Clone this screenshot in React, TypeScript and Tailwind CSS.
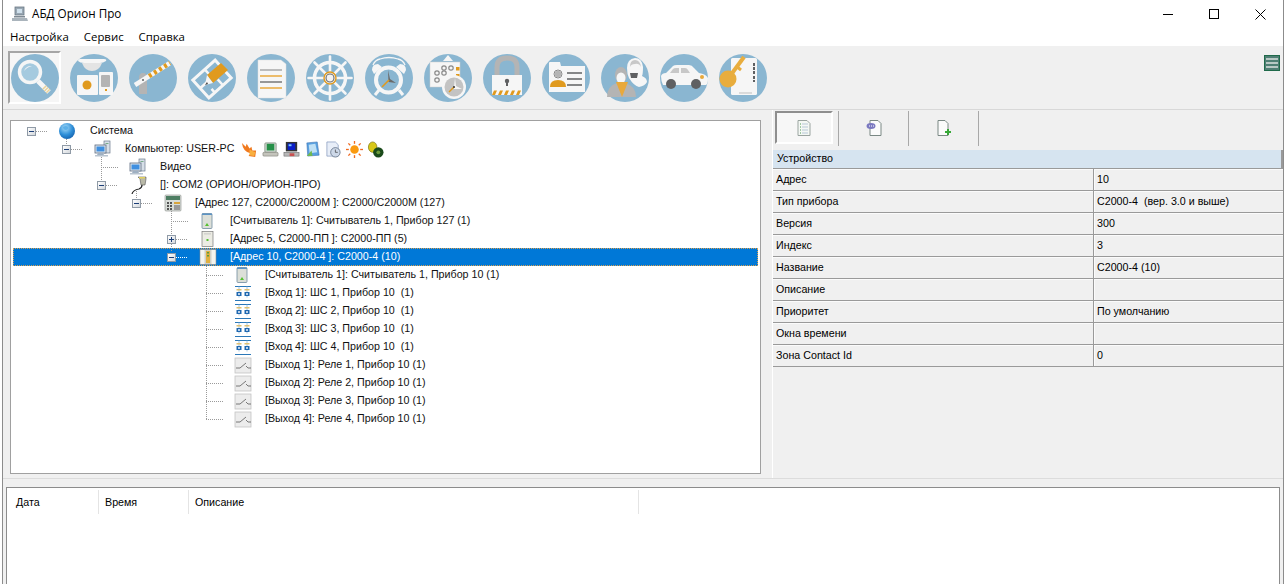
import type { ReactNode } from "react";

const BLUE = "#8ab6d1";
const ORANGE = "#e09a1e";
const WHITE = "#f6f6f6";
const GRAY = "#b4b4b4";
const DARK = "#5f6062";

function Disc({ children }: { children: ReactNode }) {
  return (
    <svg width="48" height="48" viewBox="0 0 48 48" className="block">
      <circle cx="24" cy="24" r="24" fill={BLUE} />
      {children}
    </svg>
  );
}

const toolIcons: ReactNode[] = [
  // search
  <Disc key="search">
    <line x1="27" y1="27" x2="38" y2="38" stroke={WHITE} strokeWidth="5" />
    <line x1="33" y1="33" x2="38" y2="38" stroke="#e8d29a" strokeWidth="5" strokeDasharray="1.5 1" />
    <circle cx="19" cy="18" r="10.5" fill="#a5cadf" stroke={WHITE} strokeWidth="3.5" />
    <path d="M13 17 a7 7 0 0 1 8 -5 q-5 1 -8 5z" fill={WHITE} />
  </Disc>,
  // devices
  <Disc key="devices">
    <path d="M8 7 q0 -2 2 -2 h24 q3 0 2 2 q-3 2 -6 2 q-2 7 -8 7 q-6 0 -8 -7 q-4 0 -6 -2z" fill={WHITE} />
    <path d="M12 9 h20 q-3 8 -10 8 q-7 0 -10 -8z" fill="#e4e4e4" />
    <rect x="7" y="21" width="21" height="20" rx="1" fill={WHITE} />
    <circle cx="17" cy="31" r="4.5" fill={ORANGE} />
    <rect x="29" y="18" width="14" height="23" rx="1" fill={WHITE} />
    <rect x="31" y="21" width="9" height="12" rx="1" fill={GRAY} />
    <rect x="35" y="35" width="2" height="2" fill={ORANGE} />
  </Disc>,
  // barrier
  <Disc key="barrier">
    <rect x="10" y="24" width="8" height="16" fill={GRAY} />
    <path d="M10 24 q0 -5 4 -5 q4 0 4 5z" fill={GRAY} />
    <line x1="6" y1="31" x2="41" y2="9" stroke={WHITE} strokeWidth="4.5" />
    <line x1="20" y1="22.2" x2="41" y2="9" stroke={ORANGE} strokeWidth="4.5" strokeDasharray="3 3" />
    <circle cx="14" cy="26" r="1" fill={DARK} />
  </Disc>,
  // floor plan
  <Disc key="plan">
    <g transform="rotate(-42 24 25)">
      <rect x="9" y="13" width="30" height="24" fill="none" stroke={WHITE} strokeWidth="3" />
      <path d="M9 24 h9 M25 13 v10 h14 M28 37 v-8 M17 37 v-5" stroke={WHITE} strokeWidth="2.5" fill="none" />
    </g>
    <path d="M19 21 L33 9 L40 16 L25 29z" fill={ORANGE} />
    <path d="M19 21 L25 29 L17 31z" fill={WHITE} />
    <path d="M19 28 L20 30 L17 31z" fill="#444" />
  </Disc>,
  // document
  <Disc key="doc">
    <path d="M11 6 h23 l5 4 v34 h-28z" fill={WHITE} stroke="#dcdcdc" strokeWidth="0.5" />
    <line x1="13" y1="16" x2="35" y2="16" stroke="#a8a8a8" strokeWidth="1.5" />
    <line x1="13" y1="22" x2="35" y2="22" stroke="#e8a93c" strokeWidth="1.5" />
    <line x1="13" y1="28" x2="35" y2="28" stroke="#777" strokeWidth="1.5" />
    <line x1="13" y1="34" x2="35" y2="34" stroke="#e8a93c" strokeWidth="1.5" />
  </Disc>,
  // helm
  <Disc key="helm">
    <circle cx="24" cy="24" r="15.5" fill="none" stroke={WHITE} strokeWidth="3.5" />
    <g stroke={WHITE} strokeWidth="2.6" strokeLinecap="round">
      <line x1="24" y1="2.5" x2="24" y2="45.5" />
      <line x1="2.5" y1="24" x2="45.5" y2="24" />
      <line x1="8.5" y1="8.5" x2="39.5" y2="39.5" />
      <line x1="39.5" y1="8.5" x2="8.5" y2="39.5" />
    </g>
    <circle cx="24" cy="24" r="6" fill={WHITE} stroke={ORANGE} strokeWidth="1.4" />
    <circle cx="24" cy="24" r="4" fill="#f2f2f2" stroke="#6a6a6a" strokeWidth="1.1" />
  </Disc>,
  // alarm clock
  <Disc key="alarm">
    <path d="M8 11 q2 -5 7 -6 q9 -3 18 0 q5 1 7 6" fill="none" stroke={WHITE} strokeWidth="1.3" />
    <path d="M7 16 q0 -6 6 -6 l4 3 l-8 7z M41 16 q0 -6 -6 -6 l-4 3 l8 7z" fill={WHITE} />
    <circle cx="23.5" cy="26" r="12.5" fill={BLUE} stroke={WHITE} strokeWidth="4" />
    <line x1="10" y1="41" x2="14" y2="36" stroke={WHITE} strokeWidth="3" />
    <line x1="38" y1="41" x2="34" y2="36" stroke={WHITE} strokeWidth="3" />
    <path d="M23 16 L25 25 L31 29 L23.5 28z" fill="#6a6a6a" />
    <line x1="24" y1="26" x2="17" y2="33" stroke={ORANGE} strokeWidth="1.6" />
  </Disc>,
  // schedule
  <Disc key="schedule">
    <path d="M19 7 L24 1 L29 7z" fill={WHITE} />
    <rect x="6" y="8" width="30" height="25" fill={WHITE} stroke="#cfcfcf" strokeWidth="0.5" />
    <g fill="none" stroke="#8a8a8a" strokeWidth="1.2">
      <circle cx="20" cy="14" r="2.2" />
      <circle cx="27" cy="14" r="2.2" />
      <circle cx="13" cy="19" r="2.2" />
      <circle cx="20" cy="19" r="2.2" />
      <circle cx="13" cy="26" r="2.2" />
    </g>
    <rect x="32" y="13" width="3.5" height="3.5" fill={ORANGE} />
    <rect x="32" y="20" width="3.5" height="3.5" fill={ORANGE} />
    <circle cx="30" cy="33" r="12" fill={WHITE} />
    <circle cx="30" cy="33" r="9.5" fill="#c3c3c3" />
    <path d="M30 33 L31 24 L32 32 L38 35 L30 35z" fill={WHITE} />
    <line x1="30" y1="33" x2="25" y2="38" stroke={ORANGE} strokeWidth="1.5" />
    <circle cx="30" cy="33" r="1" fill="#333" />
  </Disc>,
  // lock
  <Disc key="lock">
    <path d="M14 22 v-9 q0 -9 10 -9 q10 0 10 9 v9" fill="none" stroke={GRAY} strokeWidth="5" />
    <rect x="9" y="21" width="30" height="20" fill={WHITE} />
    <circle cx="24" cy="27" r="2.2" fill={DARK} />
    <rect x="23" y="27" width="2" height="5" fill={DARK} />
    <path d="M9 41 l2 -4.5 h3 l-2 4.5z M15 41 l2 -4.5 h3 l-2 4.5z M21 41 l2 -4.5 h3 l-2 4.5z M27 41 l2 -4.5 h3 l-2 4.5z M33 41 l2 -4.5 h3 l-2 4.5z" fill={ORANGE} />
  </Disc>,
  // id card
  <Disc key="card">
    <path d="M7 9 q0 -1 1 -1 h10 l1 4 h24 v26 h-36z" fill={WHITE} />
    <circle cx="16" cy="20" r="4" fill={WHITE} stroke="#8a8a8a" strokeWidth="1" />
    <circle cx="16" cy="20" r="3.2" fill={GRAY} />
    <path d="M8 33 q0 -7 8 -7 q8 0 8 7z" fill={ORANGE} />
    <g stroke={DARK} strokeWidth="1.5">
      <line x1="25" y1="19" x2="40" y2="19" />
      <line x1="25" y1="25" x2="40" y2="25" />
      <line x1="25" y1="31" x2="40" y2="31" />
    </g>
  </Disc>,
  // people
  <Disc key="people">
    <path d="M28 24 q-2 -4 -2 -10 q0 -9 8 -10 q7 0 8 9 q0 7 -1 9 q5 2 5 6 q-2 4 -8 5 q-5 -1 -10 -9z" fill={WHITE} />
    <path d="M29 13 q0 -7 5 -7 q5 0 6 7 q-2 -4 -6 -3 q-4 0 -5 3z" fill="#c8c8c8" />
    <path d="M29 19 h8 l-1 5 h-6z" fill={DARK} />
    <ellipse cx="20" cy="21" rx="6" ry="8" fill={GRAY} />
    <ellipse cx="20" cy="24" rx="4.5" ry="5.5" fill={WHITE} />
    <path d="M6 43 q0 -11 10 -14 h8 q11 3 11 14 h-29z" fill={GRAY} />
    <path d="M15 28 h12 l-6 15z" fill="#e8a93c" />
  </Disc>,
  // car
  <Disc key="car">
    <path d="M1 22 q1 -3 5 -3 l7 -7 q1 -1 4 -1 h12 q3 0 5 3 l5 5 q7 1 9 5 q0 6 -2 7 h-43 q-2 -4 -2 -9z" fill={WHITE} />
    <path d="M10 19 l3 -4 q1 -1 3 -1 h3 v5z M21 14 h4 q2 0 3 2 l2 3 h-9z" fill="#c8c8c8" />
    <circle cx="11" cy="30" r="5" fill={DARK} />
    <circle cx="36" cy="30" r="5" fill={DARK} />
    <circle cx="42" cy="23" r="2" fill="#e8a93c" />
  </Disc>,
  // key card
  <Disc key="key">
    <rect x="12" y="4" width="26" height="37" rx="1.5" fill={WHITE} />
    <g fill={DARK}>
      <rect x="34" y="9" width="2" height="3" />
      <rect x="34" y="13" width="2" height="3" />
      <rect x="34" y="17" width="2" height="3" />
      <rect x="34" y="22" width="2" height="3" />
      <rect x="34" y="26" width="2" height="2" />
    </g>
    <line x1="20" y1="39" x2="33" y2="39" stroke="#bfbfbf" strokeWidth="1" />
    <circle cx="9" cy="25" r="8.5" fill="#e8ad3e" />
    <line x1="11" y1="22" x2="25" y2="3" stroke="#e8ad3e" strokeWidth="4" />
    <line x1="17" y1="12" x2="22" y2="16" stroke="#e8ad3e" strokeWidth="3" />
  </Disc>,
];

function Small({ children, size = 18 }: { children: ReactNode; size?: number }) {
  return (
    <svg width={size} height={size} viewBox="0 0 18 18" className="block shrink-0">
      {children}
    </svg>
  );
}

const icons: Record<string, ReactNode> = {
  globe: (
    <Small>
      <defs>
        <radialGradient id="g1" cx="0.4" cy="0.3" r="0.8">
          <stop offset="0" stopColor="#a8dcf8" />
          <stop offset="0.55" stopColor="#2f8fd8" />
          <stop offset="1" stopColor="#0f5aa8" />
        </radialGradient>
      </defs>
      <circle cx="8" cy="9" r="8" fill="url(#g1)" />
      <path d="M4 5 q3 -2 5 0 q1 2 -2 3 q-3 0 -3 -3z" fill="#5cb0e8" />
    </Small>
  ),
  pc: (
    <Small>
      <rect x="10" y="1" width="6" height="12" fill="#d7dfe8" stroke="#6c7a8c" strokeWidth="0.7" />
      <rect x="11.5" y="3" width="3" height="1" fill="#7a8" />
      <rect x="1" y="5" width="11" height="8" fill="#dfe6ee" stroke="#5c6c80" strokeWidth="0.8" />
      <rect x="2.5" y="6.5" width="8" height="5" fill="#3f8fe0" />
      <path d="M4 13 h5 l1 2 h-7z" fill="#9fb0c2" />
      <rect x="1" y="15" width="13" height="1.5" fill="#b8c4d0" />
    </Small>
  ),
  com: (
    <Small>
      <path d="M9 1 h8 v2 l-1 6 h-2 l-2 -0 l-1 -6z" fill="#b9b9a8" stroke="#555" strokeWidth="0.6" />
      <rect x="10" y="1" width="6" height="1.5" fill="#e2d060" />
      <path d="M13 9 q0 3 -3 4 q-6 1 -7 5" fill="none" stroke="#222" strokeWidth="1.2" />
    </Small>
  ),
  panel: (
    <Small>
      <rect x="1" y="1" width="16" height="16" rx="1" fill="#d8dcd8" stroke="#8a8e8a" strokeWidth="0.6" />
      <rect x="2" y="2" width="14" height="4" fill="#4d7d62" />
      <g fill="#555">
        <rect x="3" y="8" width="2" height="2" />
        <rect x="6" y="8" width="2" height="2" />
        <rect x="3" y="11" width="2" height="2" />
        <rect x="6" y="11" width="2" height="2" />
        <rect x="3" y="14" width="2" height="2" />
        <rect x="6" y="14" width="2" height="2" />
      </g>
      <rect x="10" y="8" width="6" height="2" fill="#d9a43c" />
      <rect x="10" y="11" width="6" height="5" fill="#999" />
    </Small>
  ),
  reader: (
    <Small>
      <rect x="3" y="1.5" width="10" height="15" rx="1" fill="#dcdfd8" stroke="#6f8aa0" strokeWidth="0.8" />
      <rect x="3" y="1.5" width="10" height="1.5" fill="#5c93c4" />
      <path d="M8 11 l2 3 h-4z" fill="#55c030" />
    </Small>
  ),
  pp: (
    <Small>
      <rect x="3" y="1.5" width="11" height="15" fill="#ecece4" stroke="#7a7a7a" strokeWidth="0.7" />
      <rect x="5" y="3.5" width="7" height="0.8" fill="#bbb" />
      <rect x="7.5" y="9" width="2" height="2" fill="#55c030" />
    </Small>
  ),
  c4: (
    <Small>
      <rect x="1" y="1.5" width="16" height="15" fill="#d0d0c8" stroke="#8a8a8a" strokeWidth="0.6" />
      <rect x="1.5" y="2" width="4" height="14" fill="#f4f4ee" />
      <rect x="12.5" y="2" width="4" height="14" fill="#f4f4ee" />
      <rect x="7" y="3" width="4" height="12" fill="#e0b040" />
      <rect x="8" y="4" width="2" height="1.5" fill="#5a9a40" />
      <rect x="8" y="7" width="2" height="1.5" fill="#5a9a40" />
    </Small>
  ),
  input: (
    <Small>
      <path d="M1 2.5 h16 M1 16.5 h16" stroke="#2b78b8" strokeWidth="1" />
      <path d="M5 2.5 v11 M13 2.5 v11" stroke="#8ab8dc" strokeWidth="0.8" />
      <rect x="2.5" y="8" width="5" height="4" fill="#1f68b0" />
      <rect x="10.5" y="8" width="5" height="4" fill="#1f68b0" />
      <rect x="4" y="9.2" width="2" height="1.6" fill="#dfeaf5" />
      <rect x="12" y="9.2" width="2" height="1.6" fill="#dfeaf5" />
      <rect x="2.5" y="5" width="5" height="1.5" fill="#e0c070" />
      <rect x="10.5" y="5" width="5" height="1.5" fill="#e0c070" />
    </Small>
  ),
  relay: (
    <Small>
      <rect x="1" y="2" width="16" height="15" fill="#ececec" stroke="#c4c4c4" strokeWidth="0.8" />
      <path d="M2 12 h4 l6 -5 M12 10 l2 2 h3" fill="none" stroke="#6a6a6a" strokeWidth="0.9" />
    </Small>
  ),
};

const sysIcons: ReactNode[] = [
  <Small key="fire" size={17}>
    <path d="M1 2 l4 4 l1 -3 l3 5 l2 -2 l1 4 l4 0 l-1 7 l-7 -1 l2 -3 q-8 -2 -9 -11z" fill="#f07a20" />
    <path d="M9 9 l6 3 l-1 4 l-5 -1z" fill="#f8b040" />
  </Small>,
  <Small key="scan" size={17}>
    <rect x="3" y="2" width="12" height="10" rx="1" fill="#cfd8cf" stroke="#6a7a6a" strokeWidth="0.7" />
    <rect x="5" y="3" width="8" height="7" fill="#259048" />
    <rect x="1" y="12" width="16" height="4" rx="1" fill="#c4c4bc" stroke="#7a7a72" strokeWidth="0.6" />
  </Small>,
  <Small key="mon" size={17}>
    <rect x="3" y="1" width="12" height="10" fill="#333" />
    <rect x="5" y="2.5" width="8" height="7" fill="#0a1ec8" />
    <rect x="6" y="3.5" width="3" height="2" fill="#7ac8f8" />
    <rect x="1" y="12" width="16" height="4" fill="#b8b8b8" stroke="#555" strokeWidth="0.5" />
    <rect x="7" y="13" width="5" height="3" fill="#c85050" />
  </Small>,
  <Small key="note" size={17}>
    <path d="M3 2 l11 -1 l2 14 l-12 1z" fill="#58a0e0" stroke="#3a70b0" strokeWidth="0.6" />
    <path d="M5 4 l7 -1 l2 9 l-8 1z" fill="#bfe0f5" />
    <path d="M3 16 l5 -6 l1 6z" fill="#70b850" />
  </Small>,
  <Small key="clockdoc" size={17}>
    <path d="M2 1 h9 l3 3 v12 h-12z" fill="#e8eef8" stroke="#7a90b8" strokeWidth="0.7" />
    <circle cx="11" cy="12" r="5" fill="#cdd8e8" stroke="#5a6a80" strokeWidth="0.8" />
    <path d="M11 9 v3 h2.5" stroke="#333" strokeWidth="0.7" fill="none" />
  </Small>,
  <Small key="sun" size={17}>
    <circle cx="9" cy="9" r="4.5" fill="#fa9a10" />
    <g stroke="#f06a20" strokeWidth="1.4">
      <line x1="9" y1="0" x2="9" y2="3" />
      <line x1="9" y1="15" x2="9" y2="18" />
      <line x1="0" y1="9" x2="3" y2="9" />
      <line x1="15" y1="9" x2="18" y2="9" />
      <line x1="2.5" y1="2.5" x2="4.5" y2="4.5" />
      <line x1="13.5" y1="13.5" x2="15.5" y2="15.5" />
      <line x1="13.5" y1="4.5" x2="15.5" y2="2.5" />
      <line x1="2.5" y1="15.5" x2="4.5" y2="13.5" />
    </g>
  </Small>,
  <Small key="gears" size={17}>
    <ellipse cx="6" cy="6.5" rx="4.5" ry="5.5" fill="#d8c818" stroke="#7a7008" strokeWidth="0.7" />
    <circle cx="12" cy="12" r="5.5" fill="#1a4a1a" />
    <circle cx="12" cy="12" r="2" fill="#6a9a3a" />
  </Small>,
];

type Row = { level: number; toggle?: "minus" | "plus"; icon: string; label: string; selected?: boolean; system?: boolean };

const rows: Row[] = [
  { level: 0, toggle: "minus", icon: "globe", label: "Система" },
  { level: 1, toggle: "minus", icon: "pc", label: "Компьютер: USER-PC", system: true },
  { level: 2, icon: "pc", label: "Видео" },
  { level: 2, toggle: "minus", icon: "com", label: "[]: COM2 (ОРИОН/ОРИОН-ПРО)" },
  { level: 3, toggle: "minus", icon: "panel", label: "[Адрес 127, С2000/С2000М ]: С2000/С2000М (127)" },
  { level: 4, icon: "reader", label: "[Считыватель 1]: Считыватель 1, Прибор 127 (1)" },
  { level: 4, toggle: "plus", icon: "pp", label: "[Адрес 5, С2000-ПП ]: С2000-ПП (5)" },
  { level: 4, toggle: "minus", icon: "c4", label: "[Адрес 10, С2000-4 ]: С2000-4 (10)", selected: true },
  { level: 5, icon: "reader", label: "[Считыватель 1]: Считыватель 1, Прибор 10 (1)" },
  { level: 5, icon: "input", label: "[Вход 1]: ШС 1, Прибор 10  (1)" },
  { level: 5, icon: "input", label: "[Вход 2]: ШС 2, Прибор 10  (1)" },
  { level: 5, icon: "input", label: "[Вход 3]: ШС 3, Прибор 10  (1)" },
  { level: 5, icon: "input", label: "[Вход 4]: ШС 4, Прибор 10  (1)" },
  { level: 5, icon: "relay", label: "[Выход 1]: Реле 1, Прибор 10 (1)" },
  { level: 5, icon: "relay", label: "[Выход 2]: Реле 2, Прибор 10 (1)" },
  { level: 5, icon: "relay", label: "[Выход 3]: Реле 3, Прибор 10 (1)" },
  { level: 5, icon: "relay", label: "[Выход 4]: Реле 4, Прибор 10 (1)" },
];

const props = [
  ["Адрес", "10"],
  ["Тип прибора", "С2000-4  (вер. 3.0 и выше)"],
  ["Версия", "300"],
  ["Индекс", "3"],
  ["Название", "С2000-4 (10)"],
  ["Описание", ""],
  ["Приоритет", "По умолчанию"],
  ["Окна времени", ""],
  ["Зона Contact Id", "0"],
];

function Toggle({ kind }: { kind: "minus" | "plus" }) {
  return (
    <div className="relative z-10 w-[9px] h-[9px] shrink-0 border border-[#8f9aa6] bg-gradient-to-br from-white to-[#d4d8dc]">
      <div className="absolute left-[1px] top-[3px] w-[5px] h-[1px] bg-[#1c3f78]" />
      {kind === "plus" && <div className="absolute left-[3px] top-[1px] w-[1px] h-[5px] bg-[#1c3f78]" />}
    </div>
  );
}

function TreeRow({ row }: { row: Row }) {
  return (
    <div
      className={`relative flex items-center h-[18px] ${row.selected ? "bg-[#0078d7] text-white outline-1 outline-dotted outline-[#d9a050] -outline-offset-1" : "text-[#111]"}`}
      style={{ paddingLeft: 14 + row.level * 35 }}
    >
      {row.toggle ? <Toggle kind={row.toggle} /> : <div className="w-[9px] shrink-0" />}
      <div className="ml-[23px] relative z-10">{icons[row.icon]}</div>
      <span className="ml-[13px] pb-[1px] whitespace-pre">{row.label}</span>
      {row.system && <div className="ml-[7px] flex gap-[4px]">{sysIcons}</div>}
    </div>
  );
}

function TreeLines() {
  const h = [
    [36, 48, 131],
    [71, 83, 149],
    [101, 118, 167],
    [106, 118, 185],
    [141, 153, 203],
    [171, 188, 221],
    [176, 188, 239],
    [206, 223, 275],
    [206, 223, 293],
    [206, 223, 311],
    [206, 223, 329],
    [206, 223, 347],
    [206, 223, 365],
    [206, 223, 383],
    [206, 223, 401],
    [206, 223, 419],
  ];
  const v = [
    [66, 139, 144],
    [101, 157, 180],
    [136, 191, 198],
    [171, 209, 234],
    [171, 244, 252],
    [206, 266, 419],
  ];
  return (
    <svg className="absolute left-0 top-0 pointer-events-none" width="749" height="352" viewBox="11 121 749 352" shapeRendering="crispEdges">
      <g stroke="#9a9a9a" strokeDasharray="1 1" fill="none">
        {h.map(([a, b, y]) => (
          <line key={`${a}-${y}`} x1={a} x2={b} y1={y + 0.5} y2={y + 0.5} />
        ))}
        {v.map(([x, a, b]) => (
          <line key={`${x}-${a}`} x1={x + 0.5} x2={x + 0.5} y1={a} y2={b} />
        ))}
      </g>
      <line x1="176" x2="188" y1="257.5" y2="257.5" stroke="#fff" strokeDasharray="1 1" />
    </svg>
  );
}

export default function App() {
  return (
    <div className="w-[1285px] h-[584px] overflow-hidden bg-white text-black font-['Liberation_Sans',sans-serif] text-[10.7px]">
      <div className="h-full ml-[2px] mr-[1px] border-l border-r border-[#8c8c8c] flex flex-col">
        {/* title bar */}
        <div className="h-[28px] shrink-0 flex items-center pl-[8px] bg-white">
          <svg width="18" height="16" viewBox="0 0 18 16">
            <rect x="4" y="1" width="9" height="8" fill="#9aa8b4" stroke="#6a7884" strokeWidth="0.8" />
            <rect x="6" y="3" width="5" height="4" fill="#cfe0ec" />
            <path d="M1 12 h15 l1 3 h-16z" fill="#aab4bc" />
            <rect x="3" y="10" width="11" height="1.5" fill="#7f8a94" />
          </svg>
          <span className="ml-[3px] font-['Open_Sans',sans-serif] text-[11.7px]">АБД Орион Про</span>
          <div className="ml-auto flex items-center">
            <div className="w-[46px] h-[28px] flex items-center justify-center">
              <div className="w-[10px] h-[1px] bg-black" />
            </div>
            <div className="w-[46px] h-[28px] flex items-center justify-center">
              <div className="w-[10px] h-[10px] border border-black" />
            </div>
            <div className="w-[46px] h-[28px] flex items-center justify-center">
              <svg width="11" height="11" viewBox="0 0 11 11">
                <path d="M0.5 0.5 L10.5 10.5 M10.5 0.5 L0.5 10.5" stroke="#000" strokeWidth="1" />
              </svg>
            </div>
          </div>
        </div>
        {/* menu */}
        <div className="h-[18px] shrink-0 flex items-center pl-[7px] gap-[15px] font-['Open_Sans',sans-serif] text-[11.4px] bg-white">
          <span>Настройка</span>
          <span>Сервис</span>
          <span>Справка</span>
        </div>
        {/* toolbar */}
        <div className="h-[64px] shrink-0 bg-[#f0f0f0] border-b border-[#d8d8d8] flex items-start pl-[5px] pt-[5px] gap-[6px] relative">
          {toolIcons.map((icon, i) => (
            <div
              key={i}
              className={`w-[53px] h-[53px] flex items-center justify-center border-2 ${i === 0 ? "border-t-[#a6a6a6] border-l-[#a6a6a6] border-b-white border-r-white bg-[#f6f6f6]" : "border-transparent"}`}
            >
              {icon}
            </div>
          ))}
          <div className="ml-auto mr-[3px] mt-[4px] w-[16px] h-[16px] bg-[#4f7f74] border border-[#1f6a4a] flex flex-col justify-center gap-[2px] px-[1px]">
            <div className="h-[2px] bg-[#b8c8c4]" />
            <div className="h-[2px] bg-[#b8c8c4]" />
            <div className="h-[2px] bg-[#b8c8c4]" />
          </div>
        </div>
        {/* main area */}
        <div className="h-[369px] shrink-0 flex bg-[#f0f0f0] border-b border-[#dcdcdc]">
          <div className="w-[769px] shrink-0 pl-[7px] pt-[10px]">
            <div className="relative w-[751px] h-[354px] bg-white border border-[#a0a0a0] pt-[1px] px-[2px]">
              {rows.map((row) => (
                <TreeRow key={row.label} row={row} />
              ))}
              <TreeLines />
            </div>
          </div>
          <div className="flex-1 min-w-0 flex flex-col border-l border-white">
            <div className="h-[40px] shrink-0 flex items-start pl-[2px] pt-[1px]">
              <div className="w-[58px] h-[33px] border-2 border-t-[#8f8f8f] border-l-[#8f8f8f] border-b-white border-r-white bg-[#f7f7f7] flex items-center justify-center">
                <svg width="14" height="16" viewBox="0 0 14 16">
                  <path d="M1 0.5 h9 l3 3 v12 h-12z" fill="#f4f8f4" stroke="#9aa4a0" />
                  <path d="M3 4 h1 M3 7 h1 M3 10 h1 M3 13 h1" stroke="#4a9a50" />
                  <path d="M5 4 h6 M5 7 h6 M5 10 h6 M5 13 h6" stroke="#b8c8d8" />
                </svg>
              </div>
              <div className="w-[1px] h-[35px] ml-[5px] bg-[#a8a8a8]" />
              <div className="w-[69px] h-[33px] flex items-center justify-center">
                <svg width="16" height="16" viewBox="0 0 16 16">
                  <path d="M4 0.5 h8 l3 3 v12 h-11z" fill="#fbfbfb" stroke="#7a8884" />
                  <ellipse cx="5" cy="6" rx="4.5" ry="3" fill="#7a78c0" />
                  <path d="M3 6 h1 M5 6 h1 M7 6 h1" stroke="#fff" />
                </svg>
              </div>
              <div className="w-[1px] h-[35px] bg-[#a8a8a8]" />
              <div className="w-[69px] h-[33px] flex items-center justify-center">
                <svg width="16" height="16" viewBox="0 0 16 16">
                  <path d="M2 0.5 h7 l3 3 v12 h-10z" fill="#fbfbfb" stroke="#7a8884" />
                  <path d="M9 11 h2 v-2 h2 v2 h2 v2 h-2 v2 h-2 v-2 h-2z" fill="#38a838" />
                </svg>
              </div>
              <div className="w-[1px] h-[35px] bg-[#a8a8a8]" />
            </div>
            <div className="h-[19px] shrink-0 bg-[#d6e4f0] border-b border-r-2 border-[#9a9a9a] pl-[4px] pb-[1px] flex items-center">
              Устройство
            </div>
            {props.map(([name, value]) => (
              <div key={name} className="h-[22px] shrink-0 flex border-b border-[#9a9a9a] shadow-[inset_0_1px_0_#fbfbfb]">
                <div className="w-[321px] shrink-0 pl-[3px] pb-[1px] flex items-center border-r border-[#9a9a9a]">{name}</div>
                <div className="flex-1 pl-[2px] pb-[1px] flex items-center whitespace-pre border-l border-[#fbfbfb]">{value}</div>
              </div>
            ))}
          </div>
        </div>
        {/* event log */}
        <div className="flex-1 min-h-0 bg-[#f0f0f0] pt-[8px] pl-[3px] pr-[3px]">
          <div className="h-full bg-white border-t border-l border-r border-[#8c8c8c] flex items-start pt-[2px]">
            <div className="w-[92px] h-[24px] pl-[9px] flex items-center border-r border-[#e4e4e4]">Дата</div>
            <div className="w-[90px] h-[24px] pl-[6px] flex items-center border-r border-[#e4e4e4]">Время</div>
            <div className="w-[450px] h-[24px] pl-[6px] flex items-center border-r border-[#e4e4e4]">Описание</div>
          </div>
        </div>
      </div>
    </div>
  );
}
